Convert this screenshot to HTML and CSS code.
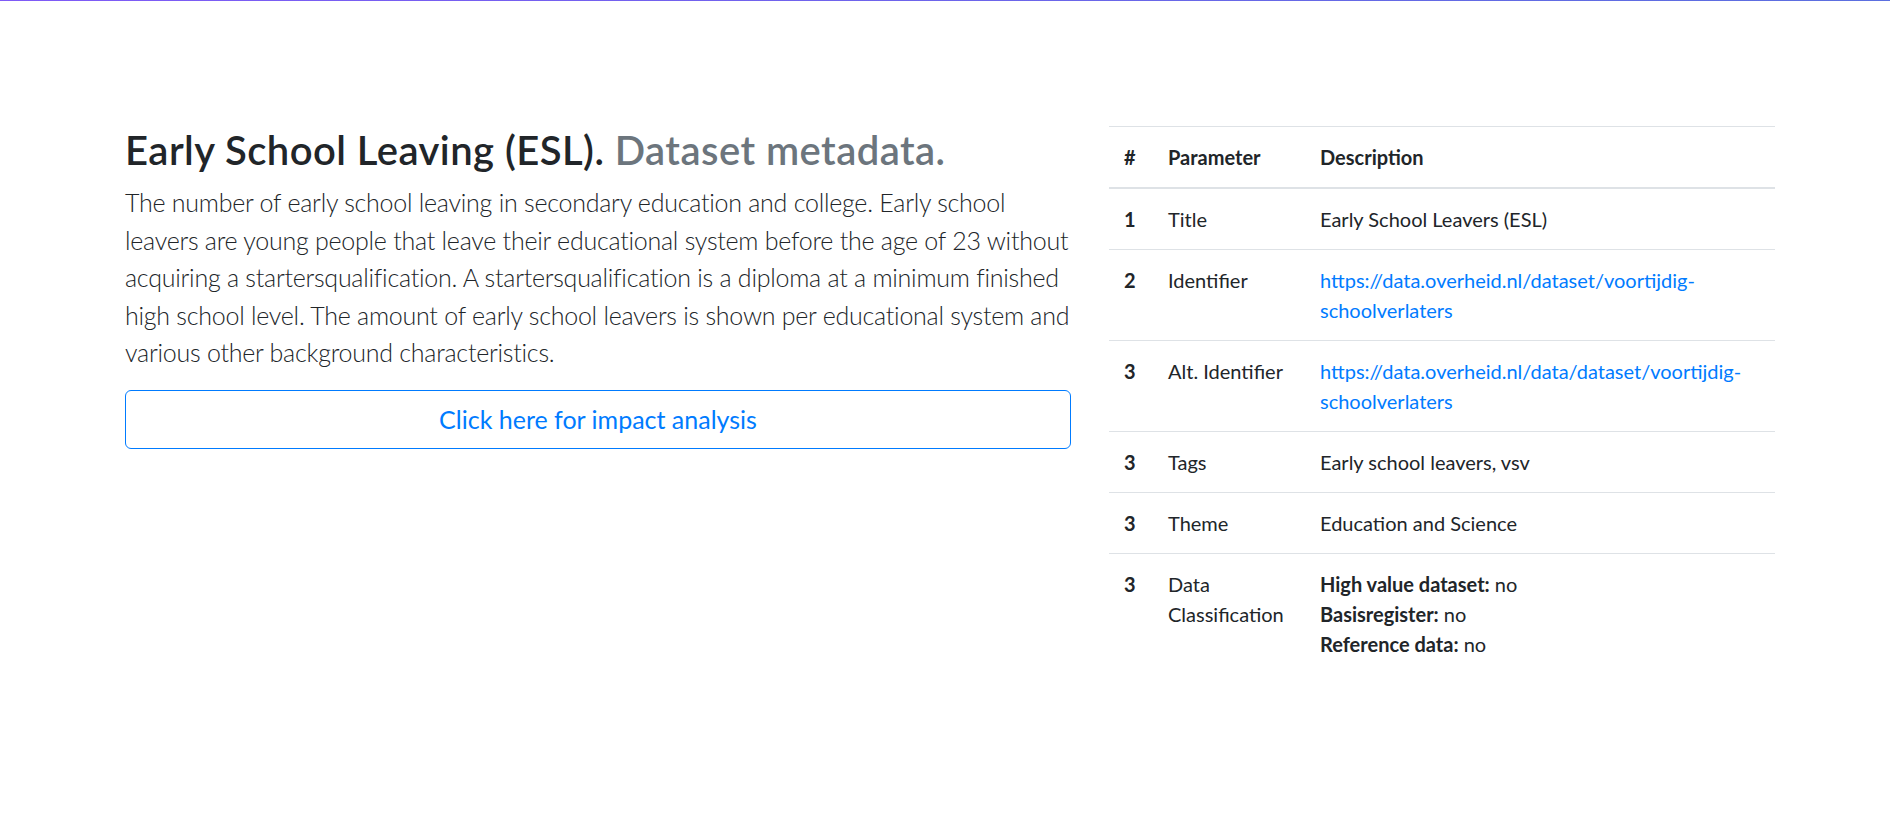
FILE: index.html
```html
<!DOCTYPE html>
<html lang="en">
<head>
<meta charset="utf-8">
<title>Early School Leaving (ESL). Dataset metadata.</title>
<link rel="stylesheet" href="styles.css">
</head>
<body>
<div class="topline"></div>
<main class="page">
  <section class="intro">
    <h2 class="title">Early School Leaving (ESL). <span class="muted">Dataset metadata.</span></h2>
    <p class="lead">The number of early school leaving in secondary education and college. Early school leavers are young people that leave their educational system before the age of 23 without acquiring a startersqualification. A startersqualification is a diploma at a minimum finished high school level. The amount of early school leavers is shown per educational system and various other background characteristics.</p>
    <a class="btn-outline" href="#">Click here for impact analysis</a>
  </section>
  <section class="meta">
    <table class="meta-table">
      <colgroup>
        <col class="c-num">
        <col class="c-param">
        <col class="c-desc">
      </colgroup>
      <thead>
        <tr><th>#</th><th>Parameter</th><th>Description</th></tr>
      </thead>
      <tbody>
        <tr><th>1</th><td>Title</td><td>Early School Leavers (ESL)</td></tr>
        <tr><th>2</th><td>Identifier</td><td><a class="link" href="#">https://data.overheid.nl/dataset/voortijdig-schoolverlaters</a></td></tr>
        <tr><th>3</th><td>Alt. Identifier</td><td><a class="link" href="#">https://data.overheid.nl/data/dataset/voortijdig-schoolverlaters</a></td></tr>
        <tr><th>3</th><td>Tags</td><td>Early school leavers, vsv</td></tr>
        <tr><th>3</th><td>Theme</td><td>Education and Science</td></tr>
        <tr><th>3</th><td>Data Classification</td><td><b>High value dataset:</b> no<br><b>Basisregister:</b> no<br><b>Reference data:</b> no</td></tr>
      </tbody>
    </table>
  </section>
</main>
</body>
</html>
```
FILE: styles.css
```css
* { box-sizing: border-box; }
html, body { margin: 0; padding: 0; background: #fff; }
body {
  font-family: "Segoe UI", Lato, "Open Sans", sans-serif;
  font-size: 20px;
  line-height: 1.5;
  color: #212529;
}
.topline {
  height: 1px;
  background: linear-gradient(to right, #7f5af6, #5b6fdf);
}
.page {
  display: flex;
  align-items: flex-start;
  gap: 38px;
  padding: 125px 0 0 125px;
}
.intro { width: 946px; flex: none; }
.meta { width: 666px; flex: none; }
.title {
  margin: 0 0 10px;
  font-size: 40px;
  font-weight: 600;
  line-height: 1.2;
  letter-spacing: 0.45px;
  color: #212529;
}
.muted { color: #6c757d; }
.lead {
  margin: 0 0 18px;
  font-size: 25px;
  font-weight: 300;
  line-height: 1.5;
  letter-spacing: -0.25px;
}
.btn-outline {
  display: block;
  text-align: center;
  color: #007bff;
  text-decoration: none;
  border: 1px solid #007bff;
  border-radius: 6px;
  padding: 10px 20px;
  font-size: 25px;
  line-height: 37px;
}
.meta-table {
  width: 100%;
  border-collapse: collapse;
  table-layout: fixed;
}
.c-num { width: 44px; }
.c-param { width: 152px; }
.meta-table th, .meta-table td {
  padding: 15px;
  border-top: 1px solid #dee2e6;
  vertical-align: top;
  text-align: left;
}
.meta-table th { font-weight: 700; }
.meta-table thead th {
  vertical-align: bottom;
  border-bottom: 2px solid #dee2e6;
}
.meta-table tbody tr:first-child th, .meta-table tbody tr:first-child td { border-top: 0; }
.link { color: #007bff; text-decoration: none; }
```
